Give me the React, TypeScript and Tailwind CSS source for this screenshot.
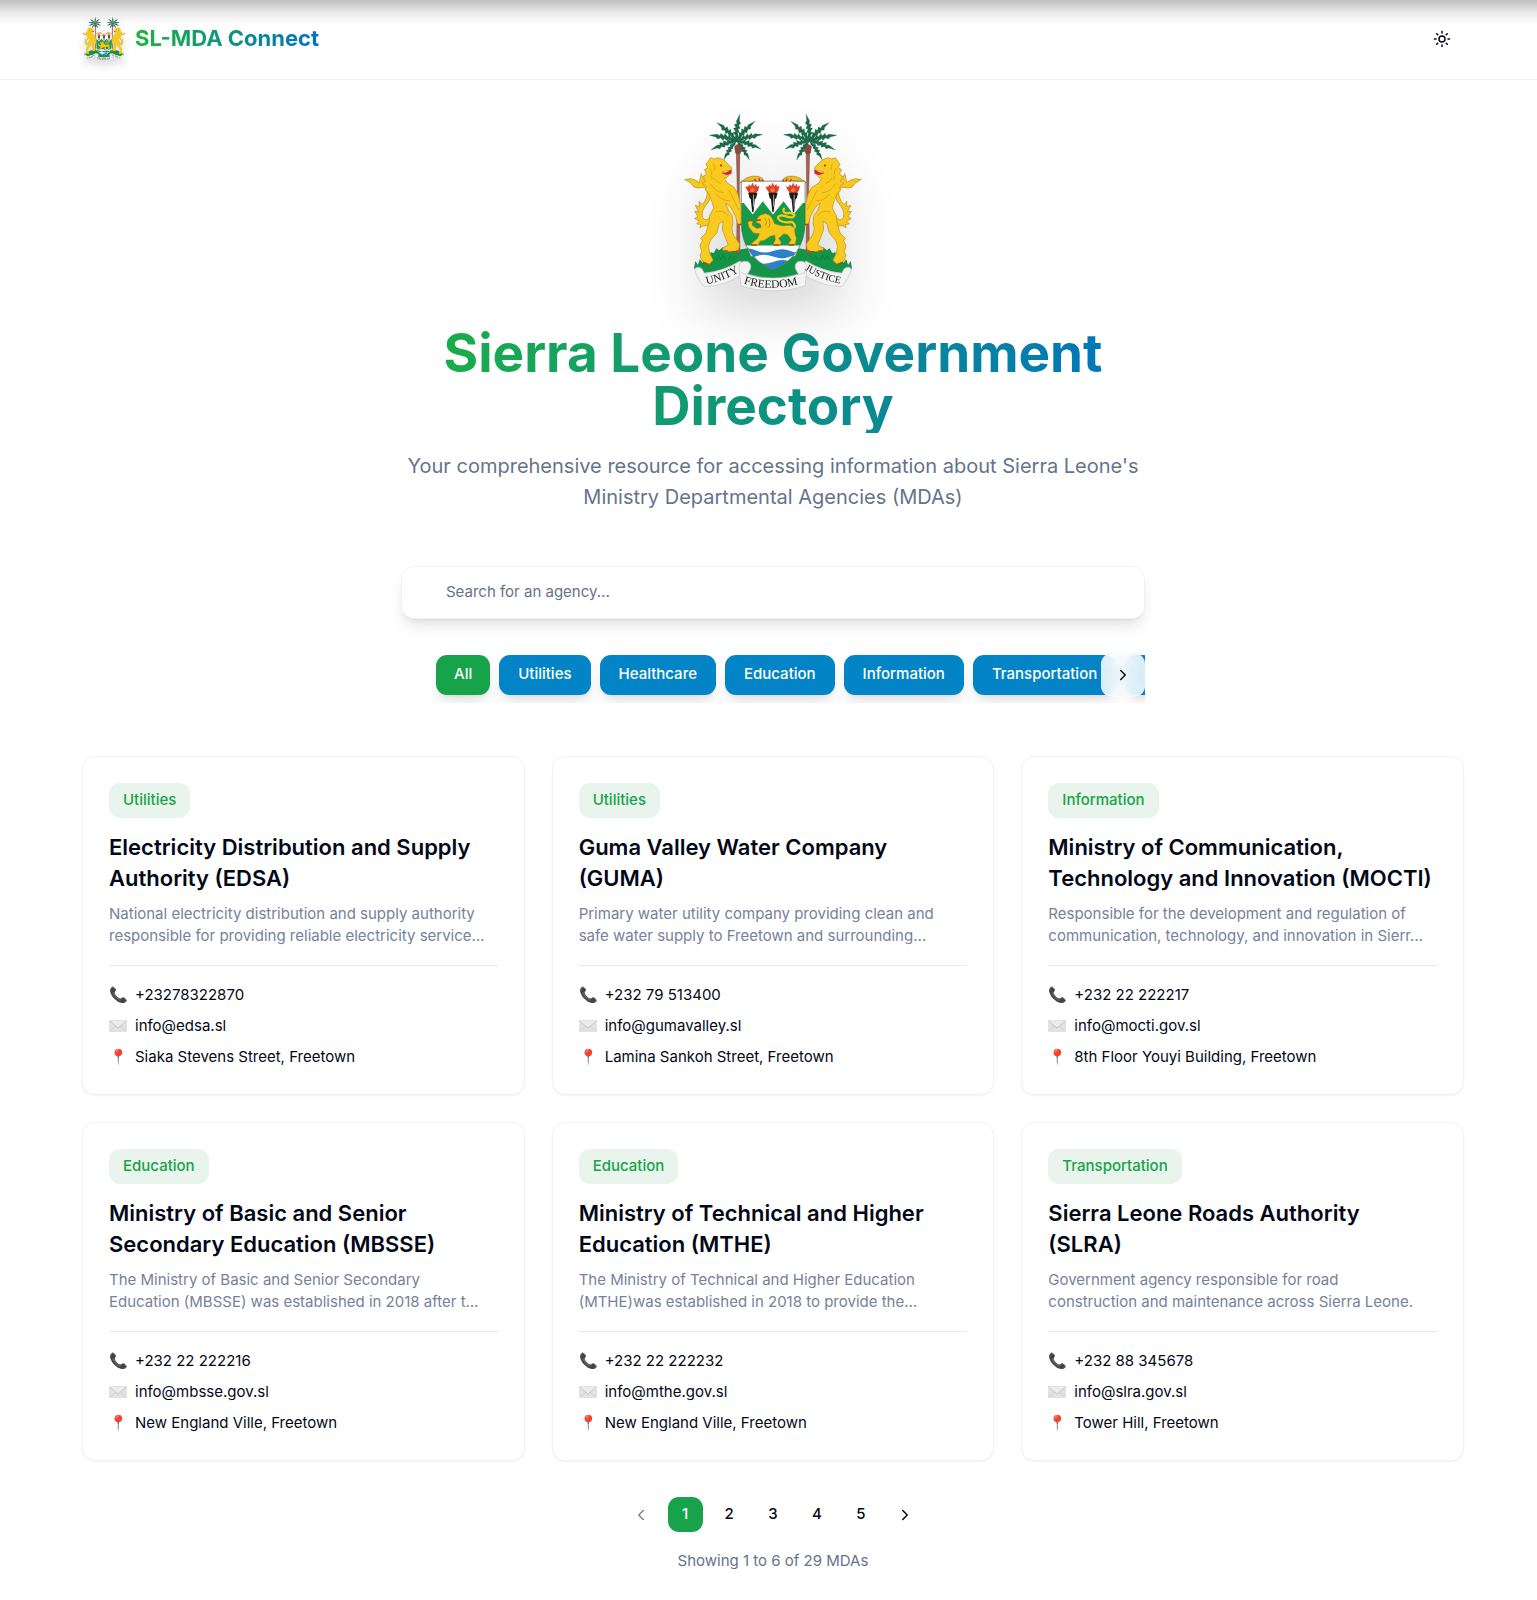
import { useId, useState } from 'react';
import { ChevronLeft, ChevronRight, Sun } from 'lucide-react';

const FROND =
  'M0 0 L-4 -12 L-2 -18 L-8 -28 L-1 -30 L-7 -42 L1 -42 L-3 -54 L5 -54 L4 -64 L16 -84 L13 -64 L17 -56 L10 -50 L14 -40 L7 -38 L10 -28 L5 -26 L6 -14 L3 -10 Z';

const FRONDS = [
  { turn: -4, flip: 1, size: 0.95 },
  { turn: 32, flip: 1, size: 0.95 },
  { turn: -36, flip: -1, size: 0.95 },
  { turn: 65, flip: 1, size: 0.94 },
  { turn: -67, flip: -1, size: 0.98 },
  { turn: 97, flip: 1, size: 0.9 },
  { turn: -98, flip: -1, size: 0.95 },
  { turn: 135, flip: 1, size: 0.8 },
  { turn: -135, flip: -1, size: 0.8 },
];

function Supporter() {
  return (
    <g strokeLinejoin="round">
      {/* grass mound */}
      <path
        d="M100 538 L104 514 L112 526 L118 508 L126 520 L136 500 L146 506 L150 488 L160 490 L168 476 L176 482 L188 472 L200 484 L214 474 L236 480 L262 476 L290 540 L339 552 L339 566 L240 560 L240 526 L160 546 L118 552 Z"
        fill="#149447"
      />
      <path d="M126 526 l6 -16 l6 14 l8 -18 l6 16 M168 512 l8 -16 l6 14 l8 -14 l6 16 M204 512 l6 -14 l8 12 l8 -12" stroke="#0c7a3c" strokeWidth="2" fill="none" />
      {/* trunk */}
      <path d="M228 176 H239 L237 300 L239 490 H229 L231 300 Z" fill="#a5604f" stroke="#7c4436" strokeWidth="1.5" />
      {/* fronds */}
      <g transform="translate(229 152)" fill="#1a6b49" stroke="#14573a" strokeWidth="1">
        {FRONDS.map((f) => (
          <path key={f.turn} d={FROND} transform={`rotate(${f.turn}) scale(${f.size * f.flip} ${f.size})`} />
        ))}
      </g>
      <path d="M223 168 L231 162 L241 166 L245 180 L238 190 L226 188 Z" fill="#8a4a3a" stroke="#6a3529" strokeWidth="1.5" />
      {/* tail */}
      <path
        d="M166 378 Q150 412 128 408 L118 414 L120 404 L108 402 L116 394 L102 386 L112 380 L102 364 L114 366 L104 346 L116 350 L116 334 L124 344 Q142 326 140 304 Q138 290 124 292 Q98 298 92 280 L72 268 Q90 262 106 270 L116 278 L122 250 L130 268 L144 286 Q158 312 144 336 Q120 362 126 382 Q140 402 154 370 Z"
        fill="#f6c71c"
        stroke="#b58a1c"
        strokeWidth="2"
      />
      {/* far paw on the shield */}
      <path d="M240 278 Q256 260 276 258 Q296 256 306 264 L312 274 L304 276 L296 270 L290 276 L282 270 L272 274 L250 274 Z" fill="#f1bd1a" stroke="#a07a1a" strokeWidth="2" />
      <path d="M284 266 l4 10 M296 264 l4 10 M306 268 l4 8" stroke="#c0392b" strokeWidth="4" />
      {/* body */}
      <path
        d="M144 212 L150 202 L162 206 L172 202 L186 207 Q196 212 202 220 L214 232 L212 240 L186 244 L194 254 L210 250 L200 262 L192 264 L200 278 L222 292 Q236 312 240 340 L254 368 L256 392 L248 404 L232 404 L226 380 L210 350 L196 340 Q202 362 216 378 L218 402 Q210 420 222 440 L238 462 L236 478 L224 486 L190 484 L186 476 L204 466 L196 446 L186 420 L188 394 L176 402 L170 428 L150 452 L144 470 L148 492 L158 512 L146 524 L126 516 L118 498 L124 486 L118 468 L126 452 L120 446 L136 430 L146 396 L148 376 L160 354 L152 328 L144 308 L134 300 L138 290 L126 280 L136 272 L128 258 L138 252 L132 238 L142 232 L136 222 Z"
        fill="#f9cb1f"
        stroke="#b58a1c"
        strokeWidth="2"
      />
      <path d="M160 262 q8 16 22 18 M150 280 q14 26 40 28 M168 312 q18 22 40 20 M166 366 q24 -8 38 12 M206 300 q16 34 30 60" stroke="#dda815" strokeWidth="3" fill="none" />
      <path d="M158 220 q10 8 4 20 M148 234 q10 8 4 20 M150 256 q8 6 4 14" stroke="#dda815" strokeWidth="3" fill="none" />
      <path d="M182 248 L198 246 L214 238 L214 250 L200 254 Z" fill="#d3252c" />
      <circle cx="182" cy="226" r="3" fill="#7a2c1c" />
      <path d="M232 404 h18 M190 484 h12 M214 486 h14 M128 518 l18 8" stroke="#b5441f" strokeWidth="4" />
    </g>
  );
}

function Torch({ x }: { x: number }) {
  return (
    <g transform={`translate(${x} 0)`}>
      <path d="M-20 296 L-22 288 L-14 291 L-12 282 L-6 288 L-1 277 L4 288 L10 281 L12 290 L20 287 L16 302 L8 310 H-10 Z" fill="#e0402a" />
      <path d="M-8 300 L-2 292 L6 300 L2 306 H-6 Z" fill="#f0802b" />
      <path d="M-14 308 H14 L10 324 L6 328 L2 366 H-2 L-6 328 L-10 324 Z" fill="#1c1c1c" />
      <path d="M2 314 V350" stroke="#aaa" strokeWidth="3" />
    </g>
  );
}

function CoatOfArms({ className }: { className: string }) {
  const id = useId();
  return (
    <svg viewBox="70 72 538 534" className={className} role="img" aria-label="Coat of arms of Sierra Leone">
      <Supporter />
      <g transform="translate(678 0) scale(-1 1)">
        <Supporter />
      </g>
      <path d="M262 500 H416 L440 540 L420 568 H258 L238 540 Z" fill="#149447" />
      {/* shield */}
      <clipPath id={`${id}s`}>
        <path d="M243 273 H436 V400 Q434 500 339 541 Q245 500 243 400 Z" />
      </clipPath>
      <g clipPath={`url(#${id}s)`}>
        <rect x="240" y="270" width="200" height="275" fill="#fff" />
        <path d="M243 340 L250 338 L278 374 L308 334 L339 374 L371 334 L401 374 L430 338 L436 340 V468 H243 Z" fill="#159a48" />
        <rect x="240" y="468" width="200" height="75" fill="#fff" />
        <path d="M240 484 Q262 470 286 482 T339 484 T392 484 T440 482 V500 Q416 490 392 501 T339 501 T286 501 T240 498 Z" fill="#2c80cc" />
        <path d="M240 516 Q264 506 286 517 T339 517 T392 517 T440 516 V545 H240 Z" fill="#2c80cc" />
      </g>
      <path d="M243 273 H436 V400 Q434 500 339 541 Q245 500 243 400 Z" fill="none" stroke="#4b5b50" strokeWidth="2" />
      <Torch x={278} />
      <Torch x={339} />
      <Torch x={401} />
      {/* lion passant */}
      <path d="M396 424 Q414 408 396 396 Q362 402 354 384 Q354 374 374 378 Q400 388 404 376 Q398 366 380 370 Q366 368 372 356" fill="none" stroke="#f6c71c" strokeWidth="7" strokeLinecap="round" />
      <path
        d="M292 384 L300 376 L316 371 L330 376 L338 388 L344 402 L366 408 L392 406 L404 416 L406 434 L410 446 L406 464 H384 L394 450 L384 436 L372 432 L356 446 L364 458 L360 466 H338 L346 450 L344 436 L330 440 L312 452 L300 454 L294 466 H270 L280 456 L292 446 L298 432 L280 430 L266 412 L263 398 L270 390 L278 394 L276 406 L290 416 L304 412 L300 402 L288 398 Z"
        fill="#f6c71c"
        stroke="#a36f18"
        strokeWidth="1.5"
      />
      <path d="M264 392 h12 M288 392 l14 -2 M272 466 h18 M340 466 h18 M386 466 h16" stroke="#b5441f" strokeWidth="5" />
      <path d="M314 384 q10 12 2 24 M326 386 q8 14 0 28" stroke="#c98f12" strokeWidth="3" fill="none" />
      {/* ribbons */}
      <g fill="#f3f3f3" stroke="#c4c4c4" strokeWidth="2" strokeLinejoin="round">
        <path d="M102 538 Q112 528 124 538 L132 552 Q186 546 240 514 L256 548 Q194 592 132 592 Q110 570 102 538 Z" />
        <path d="M576 538 Q566 528 554 538 L546 552 Q492 546 438 514 L422 548 Q484 592 546 592 Q568 570 576 538 Z" />
        <path d="M236 530 Q240 512 262 516 Q276 522 270 540 L262 554 Q339 578 416 554 L408 540 Q402 522 416 516 Q438 512 442 530 L436 590 Q339 620 242 590 Z" />
        <path d="M242 548 Q252 556 262 554 M436 548 Q426 556 416 554" fill="none" />
      </g>
      <path id={`${id}u`} d="M138 584 Q190 576 246 542" fill="none" />
      <path id={`${id}f`} d="M250 582 Q334 610 424 582" fill="none" />
      <path id={`${id}j`} d="M434 540 Q488 574 550 584" fill="none" />
      <g fill="#1d1d1d" fontFamily="Liberation Serif, serif">
        <text fontSize="34"><textPath href={`#${id}u`}>UNITY</textPath></text>
        <text fontSize="35"><textPath href={`#${id}f`}>FREEDOM</textPath></text>
        <text fontSize="30"><textPath href={`#${id}j`}>JUSTICE</textPath></text>
      </g>
    </svg>
  );
}

function MailIcon() {
  return (
    <svg viewBox="0 0 18 12" className="h-3 w-[18px]" aria-hidden="true">
      <rect width="18" height="12" rx="1" fill="#e2e2e2" />
      <path d="M1 11 L7 6 M17 11 L11 6" stroke="#d2d2d2" fill="none" />
      <path d="M0.5 1 L9 8 L17.5 1" stroke="#c6c6c6" fill="#ececec" />
    </svg>
  );
}

const CATEGORIES = ['Utilities', 'Healthcare', 'Education', 'Information', 'Transportation'];

const AGENCIES = [
  {
    category: 'Utilities',
    name: 'Electricity Distribution and Supply Authority (EDSA)',
    about: 'National electricity distribution and supply authority\nresponsible for providing reliable electricity service…',
    phone: '+23278322870',
    email: 'info@edsa.sl',
    address: 'Siaka Stevens Street, Freetown',
  },
  {
    category: 'Utilities',
    name: 'Guma Valley Water Company (GUMA)',
    about: 'Primary water utility company providing clean and\nsafe water supply to Freetown and surrounding…',
    phone: '+232 79 513400',
    email: 'info@gumavalley.sl',
    address: 'Lamina Sankoh Street, Freetown',
  },
  {
    category: 'Information',
    name: 'Ministry of Communication, Technology and Innovation (MOCTI)',
    about: 'Responsible for the development and regulation of\ncommunication, technology, and innovation in Sierr…',
    phone: '+232 22 222217',
    email: 'info@mocti.gov.sl',
    address: '8th Floor Youyi Building, Freetown',
  },
  {
    category: 'Education',
    name: 'Ministry of Basic and Senior Secondary Education (MBSSE)',
    about: 'The Ministry of Basic and Senior Secondary\nEducation (MBSSE) was established in 2018 after t…',
    phone: '+232 22 222216',
    email: 'info@mbsse.gov.sl',
    address: 'New England Ville, Freetown',
  },
  {
    category: 'Education',
    name: 'Ministry of Technical and Higher Education (MTHE)',
    about: 'The Ministry of Technical and Higher Education\n(MTHE)was established in 2018 to provide the…',
    phone: '+232 22 222232',
    email: 'info@mthe.gov.sl',
    address: 'New England Ville, Freetown',
  },
  {
    category: 'Transportation',
    name: 'Sierra Leone Roads Authority (SLRA)',
    about: 'Government agency responsible for road\nconstruction and maintenance across Sierra Leone.',
    phone: '+232 88 345678',
    email: 'info@slra.gov.sl',
    address: 'Tower Hill, Freetown',
  },
];

function AgencyCard({ agency }: { agency: (typeof AGENCIES)[number] }) {
  return (
    <article className="rounded-[13px] border border-[#f1f2f3] bg-white p-[26px] shadow-xs">
      <span className="inline-flex h-[35px] items-center rounded-[11px] bg-[#e9f4ec] px-[14px] align-top font-medium text-[#16a34a]">
        {agency.category}
      </span>
      <h2 className="mt-[14px] text-[22px] leading-[31px] font-semibold">{agency.name}</h2>
      <p className="mt-[9px] leading-[22px] whitespace-pre-line text-[#74829a]">{agency.about}</p>
      <ul className="mt-[18px] flex flex-col gap-[9px] border-t border-[#e6e9ed] pt-[18px] leading-[22px]">
        <li className="flex items-center gap-2">
          <span className="w-[18px]" aria-hidden="true">📞</span>
          <a href={`tel:${agency.phone}`}>{agency.phone}</a>
        </li>
        <li className="flex items-center gap-2">
          <MailIcon />
          <a href={`mailto:${agency.email}`}>{agency.email}</a>
        </li>
        <li className="flex items-center gap-2">
          <span className="w-[18px]" aria-hidden="true">📍</span>
          <span>{agency.address}</span>
        </li>
      </ul>
    </article>
  );
}

export default function App() {
  const [query, setQuery] = useState('');
  return (
    <div className="relative min-h-screen bg-white font-['Inter',sans-serif] text-[15px] text-[#020817]">
      <div className="pointer-events-none absolute inset-x-0 top-0 h-6 bg-linear-to-b from-[#bfbfbf] via-[#e8e8e8] to-transparent" />

      <header className="border-b border-[#f1f2f3] pr-[73px] pl-[82px]">
        <div className="flex h-[79px] items-center justify-between pb-0.5">
          <a href="#" className="flex items-center gap-[9px]">
            <CoatOfArms className="size-11 drop-shadow-lg" />
            <span className="bg-linear-to-r/srgb from-[#1eb53a] to-[#0072c6] bg-clip-text text-[22px] leading-[31px] font-bold text-transparent">
              SL-MDA Connect
            </span>
          </a>
          <button type="button" aria-label="Toggle theme" className="flex size-11 items-center justify-center">
            <Sun className="size-[18px]" />
          </button>
        </div>
      </header>

      <main className="pt-[34px] pr-[73px] pb-7 pl-[82px]">
        <section className="mx-auto flex max-w-[744px] flex-col items-center text-center">
          <CoatOfArms className="size-[178px] drop-shadow-2xl" />
          <h1 className="mt-[35px] w-full bg-linear-to-r/srgb from-[#1cb042] to-[#0074c0] bg-clip-text text-[53px] leading-[53px] font-bold text-transparent">
            Sierra Leone Government Directory
          </h1>
          <p className="mt-[18px] text-xl leading-[31px] text-[#64748b]">
            Your comprehensive resource for accessing information about Sierra Leone's Ministry Departmental Agencies (MDAs)
          </p>
          <input
            type="search"
            aria-label="Search for an agency"
            placeholder="Search for an agency..."
            value={query}
            onChange={(e) => setQuery(e.target.value)}
            className="mt-[53px] h-[53px] w-full rounded-[13px] border border-[#f1f2f3] bg-white pr-4 pb-0.5 pl-11 shadow-lg outline-none placeholder:text-[#64748b]"
          />
          <div className="relative mt-[27px] w-full pl-[31px]">
            <div className="flex gap-[9px] overflow-hidden pt-[9px] pb-2 pl-1">
              <button type="button" className="h-10 shrink-0 rounded-[11px] bg-[#16a34a] px-[18px] pb-0.5 font-medium text-white shadow-lg">
                All
              </button>
              {CATEGORIES.map((c) => (
                <button
                  key={c}
                  type="button"
                  className="h-10 shrink-0 rounded-[11px] bg-[#0284c7] px-[19px] pb-0.5 font-medium text-white shadow-lg"
                >
                  {c}
                </button>
              ))}
              <button type="button" aria-label="More categories" className="h-10 w-24 shrink-0 rounded-[11px] bg-[#0284c7] shadow-lg" />
            </div>
            <button
              type="button"
              aria-label="Scroll categories right"
              className="absolute top-[7px] right-0 flex size-11 items-center justify-center rounded-[11px] bg-white/85 backdrop-blur-sm"
            >
              <ChevronRight className="size-[18px]" />
            </button>
          </div>
        </section>

        <section className="mt-[53px] grid grid-cols-3 gap-[27px]">
          {AGENCIES.map((a) => (
            <AgencyCard key={a.name} agency={a} />
          ))}
        </section>

        <nav aria-label="Pagination" className="mt-9 flex justify-center gap-[9px] font-medium">
          <button type="button" disabled aria-label="Previous page" className="flex size-[35px] items-center justify-center opacity-50">
            <ChevronLeft className="size-[18px]" />
          </button>
          <button type="button" aria-current="page" className="size-[35px] rounded-[11px] bg-[#16a34a] text-white">1</button>
          {[2, 3, 4, 5].map((n) => (
            <button key={n} type="button" className="size-[35px] rounded-[11px]">{n}</button>
          ))}
          <button type="button" aria-label="Next page" className="flex size-[35px] items-center justify-center">
            <ChevronRight className="size-[18px]" />
          </button>
        </nav>
        <p className="mt-[18px] text-center leading-[22px] text-[#64748b]">Showing 1 to 6 of 29 MDAs</p>
      </main>
    </div>
  );
}
